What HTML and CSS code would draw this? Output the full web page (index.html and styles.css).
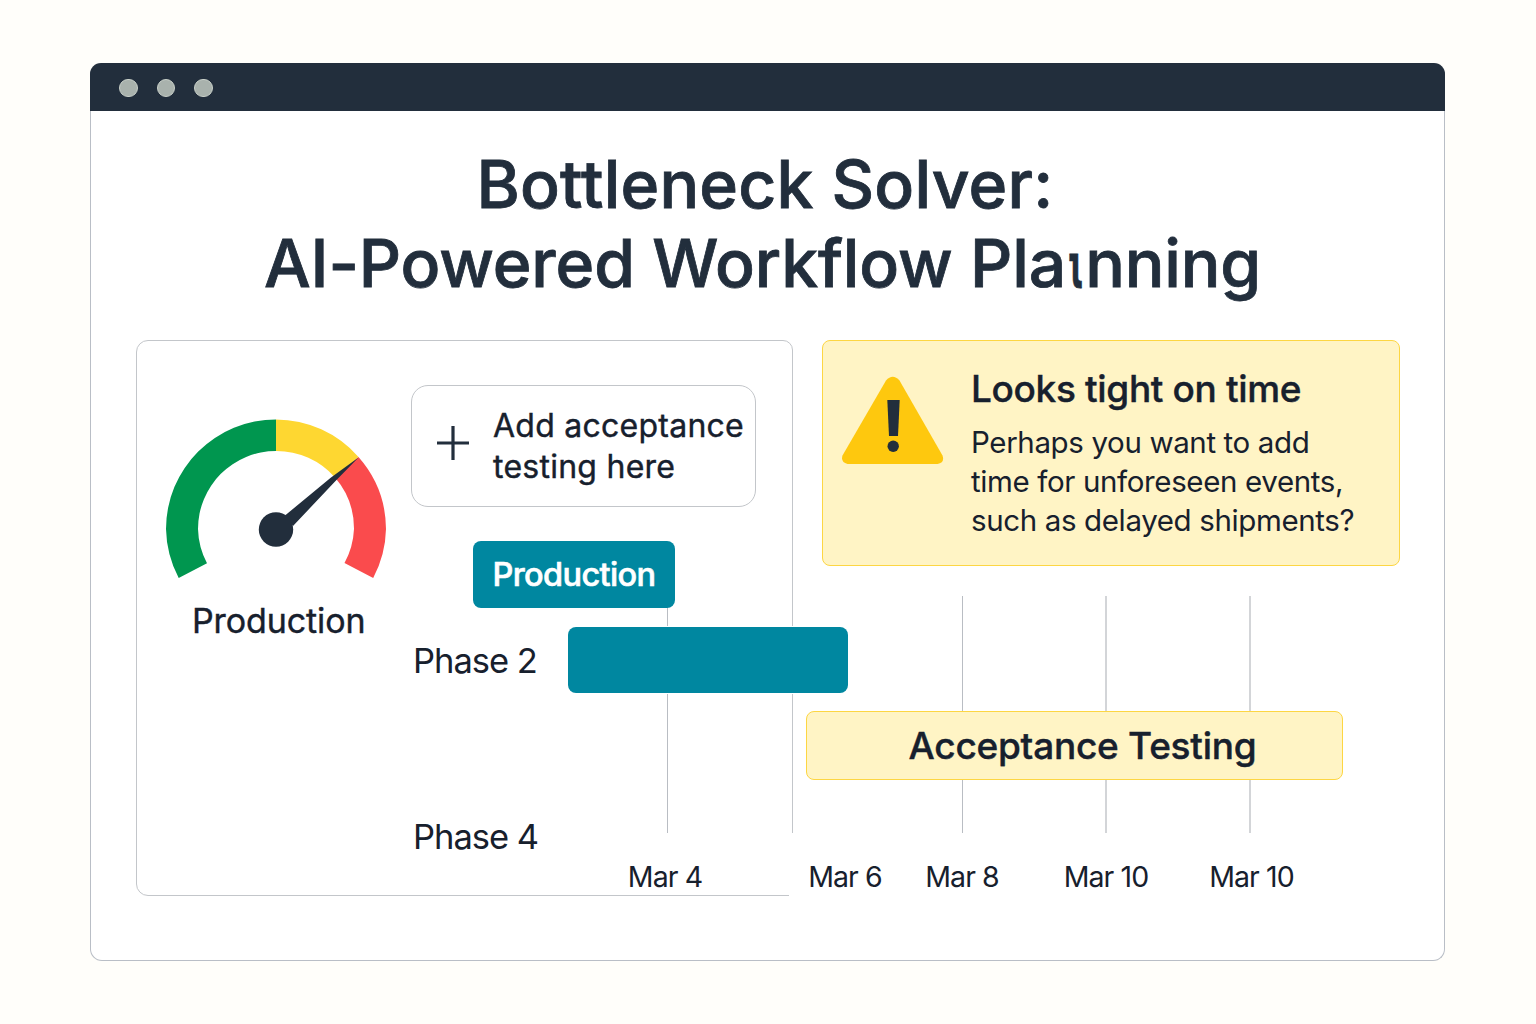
FILE: index.html
```html
<!DOCTYPE html>
<html lang="en">
<head>
<meta charset="utf-8">
<title>Bottleneck Solver</title>
<link rel="stylesheet" href="styles.css">
</head>
<body>
<main class="window">
  <header class="titlebar"><span class="dot"></span><span class="dot"></span><span class="dot"></span></header>
  <h1 class="title">
    <span class="title-line title-first">Bottleneck Solver:</span>
    <span class="title-line title-second">AI-Powered Workflow Pla<span class="iota">ι</span>nning</span>
  </h1>
  <div class="board">
    <section class="panel">
      <figure class="gauge">
        <svg class="gauge-dial" width="222" height="162" viewBox="165 418 222 162">
          <path fill="#00964f" d="M276 419.5A110 109.500 0 0 0 166 529A110 110 0 0 0 178.700 578L207 563.300A78 78 0 0 1 198 529A78 78 0 0 1 276 451Z"/>
          <path fill="#fed731" d="M276 419.5A110 110 0 0 1 358.5 457L335 477.5A78 78 0 0 0 276 451Z"/>
          <path fill="#fa4b4d" d="M358.5 457A110 110 0 0 1 386 529A110 110 0 0 1 373.200 578L344.5 563A78 78 0 0 0 354 529A78 78 0 0 0 335 477.5Z"/>
          <path fill="#222e3c" d="M358.5 457.5L331 477.5L285 515.5L293 526L335.500 481Z"/>
          <circle cx="276" cy="529.5" r="17.2" fill="#222e3c"/>
        </svg>
        <figcaption class="gauge-label">Production</figcaption>
      </figure>
      <button class="add">
        <svg width="32" height="34" viewBox="0 0 32 34" stroke="#222e3c" stroke-width="3.2"><path d="M0 17H32M16 0V34"/></svg>
        <span class="add-text">Add acceptance<br>testing here</span>
      </button>
    </section>
    <aside class="alert">
      <svg class="alert-icon" width="102" height="89" viewBox="842 376 102 89">
        <path fill="#fec80e" d="M886 380.500Q892.800 373 899.500 380.500L942.500 455.500Q945 462.500 937.500 464H847.500Q840.500 462.500 842.500 455.500Z"/>
        <path fill="#222e3c" d="M887.300 400H899.700L898 436H889Z"/>
        <circle cx="893.200" cy="446.200" r="5.700" fill="#222e3c"/>
      </svg>
      <div>
        <h2 class="alert-title">Looks tight on time</h2>
        <p class="alert-text">Perhaps you want to add<br>time for unforeseen events,<br>such as delayed shipments?</p>
      </div>
    </aside>
    <section class="gantt">
      <div class="lines"><i class="line line-a"></i><i class="line line-b"></i><i class="line line-c"></i><i class="line line-d"></i></div>
      <div class="rows">
        <div class="row row-production"><span class="bar bar-production">Production</span></div>
        <div class="row row-second"><span class="phase">Phase 2</span><span class="bar bar-second"></span></div>
        <div class="row row-testing"><span class="bar bar-testing">Acceptance Testing</span></div>
        <div class="row row-fourth"><span class="phase">Phase 4</span></div>
        <div class="dates">
          <span class="date date-4">Mar 4</span><span class="date date-6">Mar 6</span><span class="date date-8">Mar 8</span><span class="date date-10">Mar 10</span><span class="date date-end">Mar 10</span>
        </div>
      </div>
    </section>
  </div>
</main>
</body>
</html>
```
FILE: styles.css
```css
* { box-sizing: border-box; }
body {
  margin: 0;
  height: 1024px;
  padding: 63px 91px 63px 90px;
  background: #fffefa;
  color: #17202d;
  font-family: Inter, "Liberation Sans", sans-serif;
  white-space: nowrap;
  overflow: hidden;
}
.window {
  height: 898px;
  background: #fff;
  border: 1px solid #b9bec6;
  border-top: 0;
  border-radius: 12px;
}
.titlebar {
  height: 48px;
  margin: 0 -1px;
  padding: 2px 0 0 29px;
  display: flex;
  align-items: center;
  gap: 19px;
  background: #222e3c;
  border-radius: 11px 11px 0 0;
}
.dot {
  width: 18.600px;
  height: 18.600px;
  border-radius: 50%;
  background: #a9b2ad;
  border: 1px solid #c9d0c9;
}
.title {
  margin: 34px 0 37px;
  font-size: 66px;
  line-height: 79px;
  font-weight: 500;
  -webkit-text-stroke: 0.8px #222e3c;
  color: #222e3c;
  display: flex;
  flex-direction: column;
  align-items: center;
}
.title-first { margin-right: 5px; letter-spacing: 0.2px; }
.title-second { margin-right: 10px; letter-spacing: -0.13px; }
.iota {
  display: inline-block;
  width: 19px;
  font-family: "DejaVu Sans Mono", monospace;
  font-size: 62px;
  font-weight: 700;
  line-height: 1;
  transform: translate(-1px, 1px) scaleX(.56);
  transform-origin: 0 100%;
}
.board {
  margin-left: 45px;
  width: 1264px;
  display: grid;
  grid-template-columns: 657px 578px;
  grid-template-rows: 201px 355px;
  column-gap: 29px;
}
.panel {
  grid-area: 1 / 1 / 3 / 2;
  position: relative;
  display: flex;
  align-items: flex-start;
  border: 1px solid #c3c6ca;
  border-radius: 12px 10px 0 12px;
}
.panel::after {
  content: "";
  position: absolute;
  right: -2px;
  bottom: -2px;
  width: 5px;
  height: 64px;
  background: #fff;
}
.gauge {
  margin: 77px 0 0 28px;
  width: 222px;
}
.gauge-dial { display: block; }
.gauge-label {
  margin: 20px 0 0 27px;
  font-size: 34px;
  line-height: 42px;
  font-weight: 400;
  -webkit-text-stroke: 0.4px #17202d;
  letter-spacing: -0.1px;
}
.add {
  margin: 44px 0 0 24px;
  width: 345px;
  height: 122px;
  padding: 0 0 0 25px;
  display: flex;
  align-items: center;
  gap: 24px;
  border: 1px solid #c3c6ca;
  border-radius: 17px;
  background: #fff;
  color: inherit;
  font: 400 32px/41px Inter, sans-serif;
  -webkit-text-stroke: 0.4px #17202d;
  letter-spacing: 0.25px;
  text-align: left;
}
.add svg { margin-top: -6px; flex: none; }
.alert {
  grid-area: 1 / 2 / 2 / 3;
  height: 226px;
  display: flex;
  padding: 27px 0 0 19px;
  gap: 27px;
  background: #fff4c5;
  border: 1px solid #fdd643;
  border-radius: 8px;
}
.alert-icon { margin-top: 8px; }
.alert-title {
  margin: 0;
  font-size: 37px;
  line-height: 42px;
  font-weight: 500;
  -webkit-text-stroke: 0.4px #17202d;
  letter-spacing: -0.34px;
}
.alert-text {
  margin: 13px 0 0;
  font-size: 29.500px;
  line-height: 39px;
  letter-spacing: -0.37px;
}
.gantt {
  grid-area: 2 / 1 / 3 / 3;
  margin-left: 276px;
  display: grid;
  z-index: 1;
}
.lines, .rows { grid-area: 1 / 1; }
.lines { display: flex; height: 292px; padding-top: 55px; }
.line { width: 1px; background: #b9bdc3; }
.line-a { margin-left: 255px; }
.line-b { margin-left: 294px; }
.line-c { margin-left: 142px; width: 2px; background: #d3d5d8; }
.line-d { margin-left: 142px; width: 2px; background: #d3d5d8; }
.row { display: flex; align-items: center; }
.bar {
  display: flex;
  align-items: center;
  justify-content: center;
  height: 100%;
  border-radius: 8px;
}
.row-production { height: 67px; }
.row-second { height: 66px; margin-top: 19px; }
.row-testing { height: 69px; margin-top: 18px; }
.row-fourth { height: 42px; margin-top: 36px; }
.bar-production {
  width: 202px;
  margin-left: 61px;
  background: #0087a0;
  color: #fff;
  font-size: 32.500px;
  font-weight: 500;
  -webkit-text-stroke: 0.6px #fff;
  letter-spacing: -0.65px;
}
.bar-second {
  width: 280px;
  background: #0087a0;
  box-shadow: 0 0 0 1px #fff;
}
.bar-testing {
  width: 537px;
  margin-left: 394px;
  padding-left: 16px;
  background: #fff4c5;
  border: 1px solid #fdd643;
  font-size: 37px;
  font-weight: 500;
  -webkit-text-stroke: 0.4px #17202d;
  letter-spacing: -0.25px;
}
.phase {
  width: 156px;
  padding-left: 1px;
  font-size: 34.500px;
  line-height: 42px;
  letter-spacing: -1px;
}
.row-second .phase { margin-top: 1px; }
.dates { display: flex; margin-top: 2px; }
.date {
  width: 90px;
  text-align: center;
  font-size: 28.500px;
  line-height: 34px;
  letter-spacing: -0.9px;
}
.date-4 { margin-left: 208px; }
.date-6 { margin-left: 90px; }
.date-8 { margin-left: 27px; }
.date-10 { margin-left: 54px; }
.date-end { margin-left: 55.500px; }
```
